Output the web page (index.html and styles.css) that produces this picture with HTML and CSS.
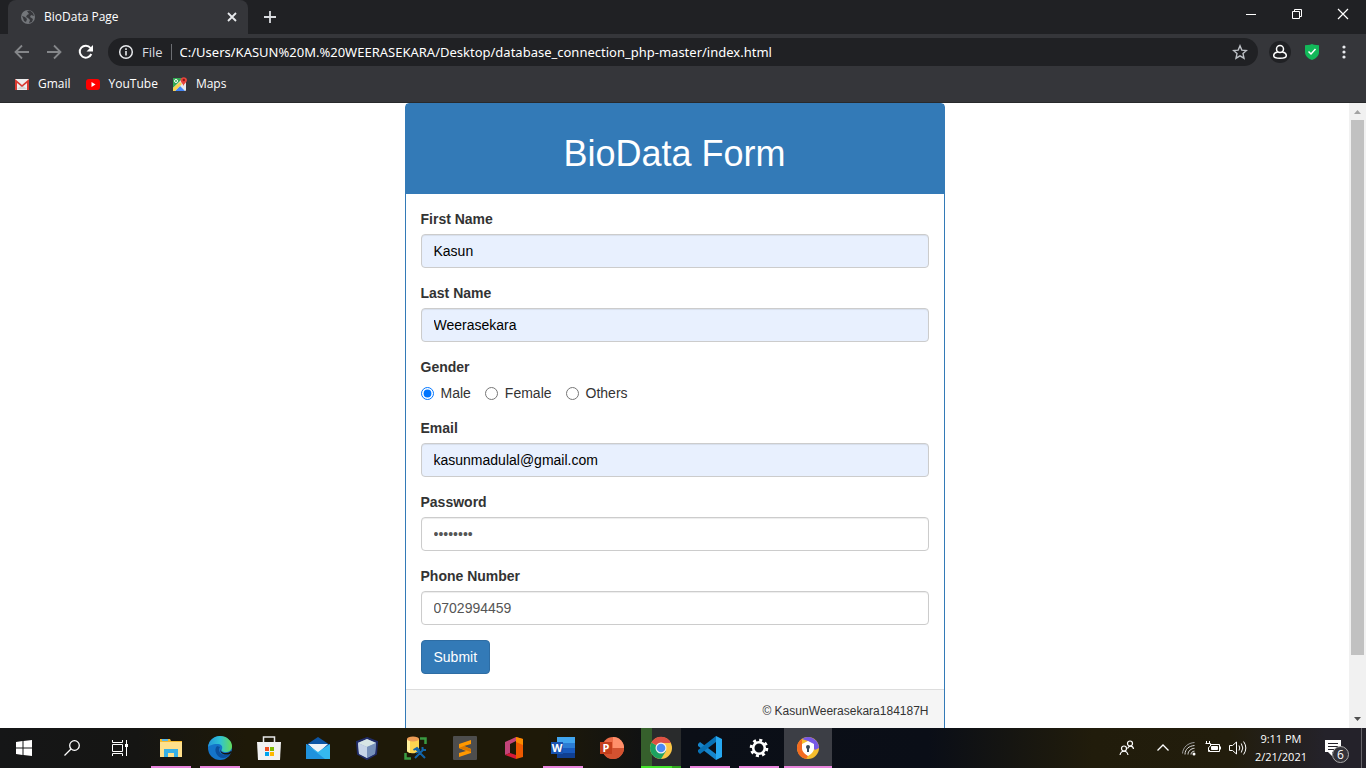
FILE: index.html
```html
<!DOCTYPE html>
<html lang="en">
<head>
    <meta charset="UTF-8">
    <meta name="viewport" content="width=device-width, initial-scale=1.0">
    <title>BioData Page</title>
    <link rel="stylesheet" href="styles.css">
</head>
<body>
    <header class="browser">
        <div class="tab-strip">
            <div class="tab">
                <svg width="16" height="16" viewBox="0 0 16 16"><circle cx="8" cy="8" r="7" fill="#73767a"/><path d="M2 7l3 1 2 2-1 3-2-1-1-3zM7 2l3-.5 3 2.5 1 3-3-1-1 2 3 2-1 3-3 1 1-3-2-2-2-1 1-2 2-1z" fill="#37383c"/></svg>
                <span class="tab-title">BioData Page</span>
                <button class="icon-btn tab-close" type="button" aria-label="Close tab">
                    <svg width="10" height="10" viewBox="0 0 10 10"><path d="M1 1l8 8M9 1L1 9" stroke="#e8eaed" stroke-width="1.8"/></svg>
                </button>
            </div>
            <button class="icon-btn new-tab" type="button" aria-label="New tab">
                <svg width="14" height="14" viewBox="0 0 14 14"><path d="M7 1v12M1 7h12" stroke="#dadce0" stroke-width="1.8"/></svg>
            </button>
            <div class="window-controls">
                <button type="button" aria-label="Minimize"><svg width="12" height="12" viewBox="0 0 12 12"><path d="M1 6.5h10" stroke="#fff"/></svg></button>
                <button type="button" aria-label="Restore"><svg width="12" height="12" viewBox="0 0 12 12" fill="none" stroke="#fff"><path d="M1.5 3.5h7v7h-7zM3.5 3.5v-2h7v7h-2"/></svg></button>
                <button type="button" aria-label="Close"><svg width="12" height="12" viewBox="0 0 12 12"><path d="M1 1l10 10M11 1L1 11" stroke="#fff" stroke-width="1.2"/></svg></button>
            </div>
        </div>

        <div class="toolbar">
            <nav class="nav-buttons">
                <button class="icon-btn" type="button" aria-label="Back"><svg width="16" height="16" viewBox="0 0 16 16" fill="none" stroke="#85878a" stroke-width="1.8"><path d="M15 8H2M8 1.5L1.5 8 8 14.5"/></svg></button>
                <button class="icon-btn" type="button" aria-label="Forward"><svg width="16" height="16" viewBox="0 0 16 16" fill="none" stroke="#85878a" stroke-width="1.8"><path d="M1 8h13M8 1.5L14.5 8 8 14.5"/></svg></button>
                <button class="icon-btn" type="button" aria-label="Reload"><svg width="16" height="16" viewBox="0 0 16 16"><path d="M13.3 10A6 6 0 1 1 12.5 4" fill="none" stroke="#fff" stroke-width="2"/><path d="M15 1v6.500H8.500z" fill="#fff"/></svg></button>
            </nav>
            <div class="address-bar">
                <svg width="16" height="16" viewBox="0 0 16 16"><circle cx="8" cy="8" r="6.3" fill="none" stroke="#e8eaed" stroke-width="1.5"/><path d="M8 7v4.500M8 4.300V6" stroke="#e8eaed" stroke-width="1.6"/></svg>
                <label class="scheme" for="url">File</label>
                <input class="url" type="text" id="url" value="C:/Users/KASUN%20M.%20WEERASEKARA/Desktop/database_connection_php-master/index.html">
                <button class="icon-btn" type="button" aria-label="Bookmark this page"><svg width="16" height="16" viewBox="0 0 16 16"><path d="M8 1.8l1.800 4.300 4.700.4-3.500 3.100 1 4.600L8 11.800l-4 2.400 1-4.600L1.500 6.500l4.700-.4z" fill="none" stroke="#bdc1c6" stroke-width="1.4"/></svg></button>
            </div>
            <div class="extensions">
                <button class="icon-btn profile" type="button" aria-label="Profile"><svg width="16" height="16" viewBox="0 0 16 16" fill="none" stroke="#fff" stroke-width="1.5"><circle cx="8" cy="5" r="3.5"/><path d="M5.800 8C3 8.500 1.700 10 1.700 11.800c0 1.600 2.600 2.500 6.300 2.500s6.300-.9 6.300-2.500C14.300 10 13 8.500 10.200 8"/></svg></button>
                <button class="icon-btn" type="button" aria-label="Safe browsing"><svg width="16" height="18" viewBox="0 0 16 18"><path d="M8 1l2 .8 5 .4v7c0 4-4 6.800-7 7.800-3-1-7-3.800-7-7.800v-7l5-.4z" fill="#12b859"/><path d="M4.500 8.500L7 11l4.500-5" fill="none" stroke="#fff" stroke-width="1.5"/></svg></button>
                <button class="icon-btn" type="button" aria-label="Menu"><svg width="16" height="16" viewBox="0 0 16 16" fill="#e8eaed"><circle cx="8" cy="3" r="1.6"/><circle cx="8" cy="8" r="1.6"/><circle cx="8" cy="13" r="1.6"/></svg></button>
            </div>
        </div>

        <nav class="bookmarks">
            <a href="#">
                <svg width="16" height="16" viewBox="0 0 16 16"><path d="M1 3h14v11H1z" fill="#eee"/><path d="M3 13l5-4 5 4z" fill="#d5d5d5"/><path d="M1 14V3l7 6 7-6v11h-2V7l-5 4-5-4v7z" fill="#d93a31"/></svg>
                Gmail
            </a>
            <a href="#">
                <svg width="16" height="16" viewBox="0 0 16 16"><rect x="1" y="3" width="14" height="11" rx="3" fill="#f00"/><path d="M6.500 6v5l4-2.500z" fill="#fff"/></svg>
                YouTube
            </a>
            <a href="#">
                <svg width="16" height="16" viewBox="0 0 16 16"><rect x="1" y="2" width="13" height="13" rx="1" fill="#e8eaed"/><path d="M1 2h10L1 12z" fill="#34a853"/><path d="M3 15l5-5 5 5z" fill="#4285f4"/><path d="M1 12l7-6 2 2-7 7H1z" fill="#fbd14b"/><circle cx="4" cy="5" r="1.5" fill="none" stroke="#fff"/><path d="M11.500 10C11 7.500 8.500 6.500 8.500 4a3.300 3.300 0 0 1 6.500 0c0 2.500-3 3.500-3.500 6z" fill="#e8453c"/><circle cx="11.8" cy="4" r="1.2" fill="#8b1b15"/></svg>
                Maps
            </a>
        </nav>
    </header>

    <div class="viewport">
        <main class="page">
            <section class="panel">
                <div class="panel-heading">
                    <h1>BioData Form</h1>
                </div>
                <form class="panel-body" id="bioForm">
                    <div class="form-group">
                        <label for="firstName">First Name</label>
                        <input class="form-control filled" type="text" id="firstName" name="firstName" value="Kasun">
                    </div>
                    <div class="form-group">
                        <label for="lastName">Last Name</label>
                        <input class="form-control filled" type="text" id="lastName" name="lastName" value="Weerasekara">
                    </div>
                    <fieldset class="form-group">
                        <legend>Gender</legend>
                        <div class="radio-row">
                            <label for="male"><input type="radio" name="gender" value="m" id="male" checked>Male</label>
                            <label for="female"><input type="radio" name="gender" value="f" id="female">Female</label>
                            <label for="others"><input type="radio" name="gender" value="o" id="others">Others</label>
                        </div>
                    </fieldset>
                    <div class="form-group">
                        <label for="email">Email</label>
                        <input class="form-control filled" type="text" id="email" name="email" value="kasunmadulal@gmail.com">
                    </div>
                    <div class="form-group">
                        <label for="password">Password</label>
                        <input class="form-control" type="password" id="password" name="password" value="password">
                    </div>
                    <div class="form-group">
                        <label for="number">Phone Number</label>
                        <input class="form-control" type="text" id="number" name="number" value="0702994459">
                    </div>
                    <button class="submit-btn" type="submit">Submit</button>
                </form>
                <footer class="panel-footer">
                    <small>&copy; KasunWeerasekara184187H</small>
                </footer>
            </section>
        </main>
        <div class="scrollbar">
            <svg width="17" height="17" viewBox="0 0 17 17"><path d="M5 11l3.500-4 3.500 4z" fill="#a3a3a3"/></svg>
            <div class="scroll-track"><div class="scroll-thumb"></div></div>
            <svg width="17" height="17" viewBox="0 0 17 17"><path d="M5 6l3.500 4L12 6z" fill="#505050"/></svg>
        </div>
    </div>

    <footer class="taskbar">
        <div class="system-buttons">
            <button type="button" aria-label="Start"><svg width="16" height="16" viewBox="0 0 16 16" fill="#fff"><path d="M0 2l6.500-.9v6.400H0zM7.500 1L16 0v7.500H7.500zM0 8.500h6.500v6.400L0 14zM7.500 8.500H16V16l-8.500-1z"/></svg></button>
            <button type="button" aria-label="Search"><svg width="16" height="16" viewBox="0 0 16 16" fill="none" stroke="#fff" stroke-width="1.3"><circle cx="10.5" cy="5.5" r="4.8"/><path d="M7 9L.5 15.500"/></svg></button>
            <button type="button" aria-label="Task view"><svg width="16" height="16" viewBox="0 0 16 16" fill="none" stroke="#fff"><path d="M.5 0v2.500h10V0M.5 4.500h10v7H.5zM.5 16v-2.500h10V16M14.500 0v16"/><path d="M13 4h3v3h-3z" fill="#fff" stroke="none"/></svg></button>
        </div>
        <div class="apps">
            <button class="app running" type="button" aria-label="File Explorer"><svg width="24" height="24" viewBox="0 0 24 24"><path d="M1 3h10l1 2h11v16H1z" fill="#f5b92d"/><path d="M1 6h22v15H1z" fill="#ffe08b"/><path d="M3 3h6v2H3z" fill="#5bb7e6"/><path d="M5 13h14v8h-4v-4H9v4H5z" fill="#37b0e6"/></svg></button>
            <button class="app running" type="button" aria-label="Edge">
                <svg width="24" height="24" viewBox="0 0 24 24">
                    <defs><linearGradient id="edgeTop"><stop stop-color="#2496da"/><stop offset=".5" stop-color="#2fc3d5"/><stop offset="1" stop-color="#65dc59"/></linearGradient></defs>
                    <circle cx="12" cy="12" r="12" fill="#1474c9"/>
                    <path d="M0 11C1 4 6 0 12 0c7 0 12 5 12 10 0 4-3 6-6 6-4 0-5-1-4-3 1-3-1-5-5-5-5 0-8 2-9 3z" fill="url(#edgeTop)"/>
                    <path d="M9 10c-4 4 0 12 6 12 3 0 6-2 7-4-9 3-13-3-10-7z" fill="#0b509e"/>
                    <path d="M13 13c-1 2 1 4 5 4 2 0 4-1 5-2l1 1-2 2c-7 2-11-2-9-5z" fill="#171511"/>
                </svg>
            </button>
            <button class="app" type="button" aria-label="Microsoft Store"><svg width="24" height="24" viewBox="0 0 24 24"><path d="M6.500 8V1h11v7" fill="none" stroke="#e8e8e8" stroke-width="1.5"/><path d="M0 6h24l-1 18H1z" fill="#f2f2f2"/><path d="M8 11h4v4H8z" fill="#f25022"/><path d="M13 11h4v4h-4z" fill="#7fba00"/><path d="M8 16h4v4H8z" fill="#00a4ef"/><path d="M13 16h4v4h-4z" fill="#ffb900"/></svg></button>
            <button class="app" type="button" aria-label="Mail"><svg width="24" height="24" viewBox="0 0 24 24"><path d="M0 9l12-8 12 8v14H0z" fill="#0d55a4"/><path d="M2 8h20L12 17z" fill="#eef3f7"/><path d="M0 8l12 8L24 8v15H0z" fill="#35b8ee"/><path d="M0 23V8l19 15z" fill="#2092dc"/></svg></button>
            <button class="app" type="button" aria-label="VirtualBox"><svg width="24" height="24" viewBox="0 0 24 24"><path d="M12 2l10 4-1 12-9 5-9-5L2 6z" fill="#92a9ca" stroke="#202b66" stroke-width="2"/><path d="M12 3l9 4-9 4-9-4z" fill="#d7e5e4"/><path d="M12 11l9-4-1 11-8 4z" fill="#7690b9"/><path d="M3 7l9 4v11l-8-4z" fill="#c6d4e7"/></svg></button>
            <button class="app" type="button" aria-label="Database tools"><svg width="24" height="24" viewBox="0 0 24 24"><path d="M3 3v12c0 3 12 3 12 0V3z" fill="#fbd451"/><path d="M3 3v12l3 2V4z" fill="#fff09c"/><ellipse cx="9" cy="3" rx="6" ry="2.5" fill="#ed9c55"/><path d="M16 2.500h5.500V8M1.500 17v5.500H7" fill="none" stroke="#3a9b42" stroke-width="2.5"/><path d="M11 22l9-9M12 13l9 9M9.500 14l3.500-2 2 2-3 3M18.500 11v3h3.500" fill="none" stroke="#1264aa" stroke-width="2"/></svg></button>
            <button class="app" type="button" aria-label="Sublime Text"><svg width="24" height="24" viewBox="0 0 24 24"><rect width="24" height="24" rx="1" fill="#4d4d4d"/><path d="M6 8l12-4v4l-7 2 7 3v4L6 21v-4l7-2-7-3z" fill="#ff9800"/><path d="M11 10l7 3v3L6 12z" fill="#d97700"/></svg></button>
            <button class="app" type="button" aria-label="Office"><svg width="24" height="24" viewBox="0 0 24 24"><path d="M3 6l11-5v4L8 8v9l-5 2z" fill="#c34479"/><path d="M14 1l7 2v18l-7 2z" fill="#ed5900"/><path d="M14 1l7 2v6l-7-3z" fill="#fb8b00"/><path d="M3 19l5-2 6 2v4z" fill="#d71938"/></svg></button>
            <button class="app running" type="button" aria-label="Word"><svg width="24" height="24" viewBox="0 0 24 24"><path d="M6 1h18v6H6z" fill="#41a5ee"/><path d="M6 7h18v5H6z" fill="#2b7cd3"/><path d="M6 12h18v5H6z" fill="#185abd"/><path d="M6 17h18v5H6z" fill="#103f91"/><path d="M0 6h12v12H0z" fill="#1853b1"/><text x="6" y="16" class="app-letter">W</text></svg></button>
            <button class="app" type="button" aria-label="PowerPoint"><svg width="24" height="24" viewBox="0 0 24 24"><circle cx="13" cy="12" r="11" fill="#ed6c47"/><path d="M13 1a11 11 0 0 1 11 11H13z" fill="#ff8f6b"/><path d="M2 12h22a11 11 0 0 1-22 0z" fill="#d35230"/><path d="M0 6h12v12H0z" fill="#c43e1c"/><text x="6" y="16" class="app-letter">P</text></svg></button>
            <button class="app chrome running" type="button" aria-label="Chrome"><svg width="24" height="24" viewBox="0 0 24 24"><circle cx="12" cy="12" r="11" fill="#fbc645"/><path d="M12 12L2.500 6.500A11 11 0 0 0 12 23l5-8z" fill="#1da261"/><path d="M12 12L2.500 6.500A11 11 0 0 1 22 7H12z" fill="#dd5144"/><circle cx="12" cy="12" r="5.5" fill="#f1f1f1"/><circle cx="12" cy="12" r="4.3" fill="#4a8af4"/></svg></button>
            <button class="app running" type="button" aria-label="Visual Studio Code"><svg width="24" height="24" viewBox="0 0 24 24"><path d="M0 8l2-2 16 12v6L0 10z" fill="#1685cc"/><path d="M0 16l2 2L18 6V0L0 14z" fill="#0871b5"/><path d="M18 0l6 3v18l-6 3z" fill="#26a8f1"/></svg></button>
            <button class="app running" type="button" aria-label="Settings"><svg width="24" height="24" viewBox="0 0 24 24" fill="none" stroke="#fff"><circle cx="12" cy="12" r="5.8" stroke-width="2.6"/><circle cx="12" cy="12" r="7.9" stroke-width="2.8" stroke-dasharray="3 3.2"/></svg></button>
            <button class="app active" type="button" aria-label="Secure Browser"><svg width="24" height="24" viewBox="0 0 24 24"><circle cx="12" cy="12" r="11" fill="#f5bd2d"/><path d="M6 3a11 11 0 0 1 17 9l-4 2L12 5z" fill="#7657e5"/><path d="M6 3a11 11 0 0 0 4 20l2-3-6-8z" fill="#f36b21"/><path d="M12 5l6 3v4c0 4-3 6-6 8-3-2-6-4-6-8V8z" fill="#fff"/><circle cx="12" cy="11" r="2" fill="#34495b"/><path d="M11 11h2v5h-2z" fill="#34495b"/></svg></button>
        </div>
        <div class="tray">
            <svg width="16" height="16" viewBox="0 0 16 16" fill="none" stroke="#fff" stroke-width="1.2"><circle cx="11" cy="3.5" r="2.5"/><path d="M8.500 8.500c1.500-3.500 5.500-3 6 .5"/><circle cx="5" cy="8.5" r="2.5"/><path d="M1 15c1-5 7-5 8 0"/></svg>
            <svg class="chevron" width="12" height="16" viewBox="0 0 12 16" fill="none" stroke="#fff" stroke-width="1.3"><path d="M.5 10.500L6 5l5.500 5.500"/></svg>
            <svg width="16" height="16" viewBox="0 0 16 16" fill="none" stroke="#ddd"><path d="M4 14.500C4 9 8 6 13.500 5.500M7 14.500c0-3.500 3-6 6.500-6.200M10 14.500c0-2 1.500-3.200 3.500-3.400"/><path d="M1.500 13.500C2 7 7 3 13.500 2.500" stroke="#999"/><circle cx="13" cy="14" r="1.5" fill="#fff" stroke="none"/></svg>
            <svg width="16" height="16" viewBox="0 0 16 16" fill="none" stroke="#fff"><path d="M6 4.500h8.500v7h-10V10M1.500 1v2.500M4.500 1v2.500M.5 3.500h5V6L3.500 7.500V11.500h1"/><path d="M6.500 6.500h6v3h-6z" fill="#fff"/><path d="M15.500 6.500v3"/></svg>
            <svg width="18" height="16" viewBox="0 0 18 16" fill="none" stroke="#fff"><path d="M.5 5.500h3l4-3.500v12l-4-3.500h-3zM10 5.500q1.500 2.500 0 5M12.300 3.500q3 4.500 0 9M14.600 1.500q4.500 6.500 0 13"/></svg>
            <time class="clock" datetime="2021-02-21T21:11"><span>9:11 PM</span><span>2/21/2021</span></time>
            <button class="notifications" type="button" aria-label="Notifications">
                <svg width="18" height="18" viewBox="0 0 18 18"><path d="M1 1h16v12H8v4l-4-4H1z" fill="#fff"/><path d="M4 4.500h10M4 7.500h10M4 10.500h6" stroke="#24222a"/></svg>
                <span class="badge">6</span>
            </button>
        </div>
    </footer>

    <script>
        document.getElementById('bioForm').addEventListener('submit', function(e) {
            e.preventDefault();
        });
    </script>
</body>
</html>
```

FILE: styles.css
```css
* {
    box-sizing: border-box;
}

body {
    margin: 0;
    height: 100vh;
    display: flex;
    flex-direction: column;
    overflow: hidden;
    font-family: "Liberation Sans", Arial, sans-serif;
    font-size: 14px;
    line-height: 20px;
    color: #333;
    background: #fff;
}

button {
    border: 0;
    padding: 0;
    background: none;
    font: inherit;
    cursor: pointer;
}

svg {
    display: block;
    flex: none;
}

/* Browser window */
.browser,
.taskbar {
    flex: none;
    font-family: "Open Sans", "Noto Sans", sans-serif;
    font-size: 12px;
    color: #fff;
}

.browser {
    background: #35363a;
    border-bottom: 1px solid #28292b;
}

.tab-strip {
    display: flex;
    height: 34px;
    padding-left: 8px;
    background: #202124;
}

.tab {
    display: flex;
    align-items: center;
    width: 240px;
    padding: 0 10px 0 12px;
    gap: 8px;
    background: #35363a;
    border-radius: 8px 8px 0 0;
}

.tab-title {
    flex: 1;
}

.icon-btn {
    display: flex;
    align-items: center;
    justify-content: center;
}

.tab-close {
    width: 12px;
}

.new-tab {
    width: 28px;
    margin-left: 8px;
}

.window-controls {
    display: flex;
    height: 28px;
    margin-left: auto;
}

.window-controls button {
    display: flex;
    align-items: center;
    justify-content: center;
    width: 46px;
}

.toolbar {
    display: flex;
    align-items: center;
    height: 36px;
    padding: 0 14px;
}

.nav-buttons {
    display: flex;
    gap: 16px;
}

.address-bar {
    flex: 1;
    display: flex;
    align-items: center;
    height: 28px;
    margin: 0 11px 0 14px;
    padding: 0 10px;
    border-radius: 14px;
    background: #202124;
}

.scheme {
    margin-left: 8px;
    padding-right: 8px;
    line-height: 16px;
    font-size: 13px;
    color: #dadce0;
    border-right: 1px solid #6c6e72;
}

.url {
    flex: 1;
    min-width: 0;
    padding: 0 8px;
    border: 0;
    outline: 0;
    background: none;
    font-family: "Noto Sans", sans-serif;
    font-size: 13px;
    color: #fff;
}

.extensions {
    display: flex;
    align-items: center;
    gap: 16px;
}

.profile {
    width: 22px;
    height: 22px;
    margin-right: -3px;
    border-radius: 50%;
    background: #202124;
}

.bookmarks {
    display: flex;
    gap: 14px;
    height: 32px;
    padding: 0 14px 4px;
}

.bookmarks a {
    display: flex;
    align-items: center;
    gap: 8px;
    color: #fff;
    text-decoration: none;
}

/* Page */
.viewport {
    flex: 1;
    min-height: 0;
    display: flex;
}

.page {
    flex: 1;
    overflow: hidden;
}

.panel {
    max-width: 540px;
    margin: 0 auto;
    border: 1px solid #337ab7;
    border-radius: 4px;
}

.panel-heading {
    padding: 30px 15px 20px;
    background: #337ab7;
    color: #fff;
    text-align: center;
}

.panel-heading h1 {
    margin: 0;
    font-size: 36px;
    font-weight: 400;
    line-height: 40px;
}

.panel-body {
    padding: 15px;
}

.form-group {
    margin: 0 0 15px;
    padding: 0;
    border: 0;
}

.form-group label,
.form-group legend {
    display: block;
    margin-bottom: 5px;
    padding: 0;
    font-weight: 700;
}

.form-control {
    display: block;
    width: 100%;
    height: 34px;
    padding: 6px 12px;
    border: 1px solid #ccc;
    border-radius: 4px;
    background: #fff;
    box-shadow: inset 0 1px 1px rgba(0, 0, 0, .075);
    font: inherit;
    color: #555;
}

.form-control.filled {
    background: #e8f0fe;
    color: #000;
}

.radio-row {
    display: flex;
    gap: 14px;
    padding-top: 1px;
}

.radio-row label {
    display: flex;
    align-items: center;
    gap: 7px;
    margin: 0;
    font-weight: 400;
}

.radio-row input {
    width: 13px;
    height: 13px;
    margin: 0;
    accent-color: #0075ff;
}

.submit-btn {
    display: block;
    padding: 6px 12px;
    border: 1px solid #2e6da4;
    border-radius: 4px;
    background: #337ab7;
    color: #fff;
}

.panel-footer {
    padding: 10px 15px;
    border-top: 1px solid #ddd;
    background: #f5f5f5;
    text-align: right;
}

.panel-footer small {
    font-size: 12px;
}

.scrollbar {
    width: 17px;
    display: flex;
    flex-direction: column;
    background: #f1f1f1;
}

.scroll-track {
    flex: 1;
    padding: 0 2px;
}

.scroll-thumb {
    height: 90.5%;
    background: #c1c1c1;
}

/* Taskbar */
.taskbar {
    display: flex;
    height: 40px;
    background: linear-gradient(90deg, #151617 0%, #151513 10%, #1e1908 18%, #1e1908 40%, #0b0f17 50%, #0a0e17 68%, #211c0b 80%, #221d0c 90%, #24222a 97%);
}

.system-buttons {
    display: flex;
}

.system-buttons button {
    display: flex;
    align-items: center;
    justify-content: center;
    width: 48px;
}

.apps {
    display: flex;
    gap: 1px;
    padding-left: 3px;
}

.app {
    display: flex;
    align-items: center;
    justify-content: center;
    width: 48px;
}

.app.running {
    background: linear-gradient(#e884dc, #e884dc) center bottom / 40px 2px no-repeat;
}

.app.active {
    background: #3c3e45;
    border-bottom: 2px solid #e884dc;
    padding-top: 2px;
}

.app.chrome {
    background:
        linear-gradient(90deg, #44e52c 31px, #2fa51f 31px) center bottom / 40px 2px no-repeat,
        linear-gradient(90deg, #36602c 11px, #292b2c 11px) center / 40px 100% no-repeat;
}

.app-letter {
    font: bold 11px "Open Sans", sans-serif;
    fill: #fff;
    text-anchor: middle;
}

.tray {
    display: flex;
    align-items: center;
    gap: 8px;
    margin-left: auto;
    margin-right: 4px;
    border-right: 1px solid #66646a;
}

.chevron {
    margin: 0 4px 0 14px;
}

.clock {
    display: flex;
    flex-direction: column;
    align-items: center;
    font-size: 11px;
    line-height: 18px;
}

.notifications {
    position: relative;
    width: 46px;
    padding-left: 9px;
}

.badge {
    position: absolute;
    left: 17px;
    top: 7px;
    width: 17px;
    height: 17px;
    border: 1px solid #aaa;
    border-radius: 50%;
    background: #35343a;
    color: #fff;
    font-size: 12px;
    line-height: 15px;
}
```
